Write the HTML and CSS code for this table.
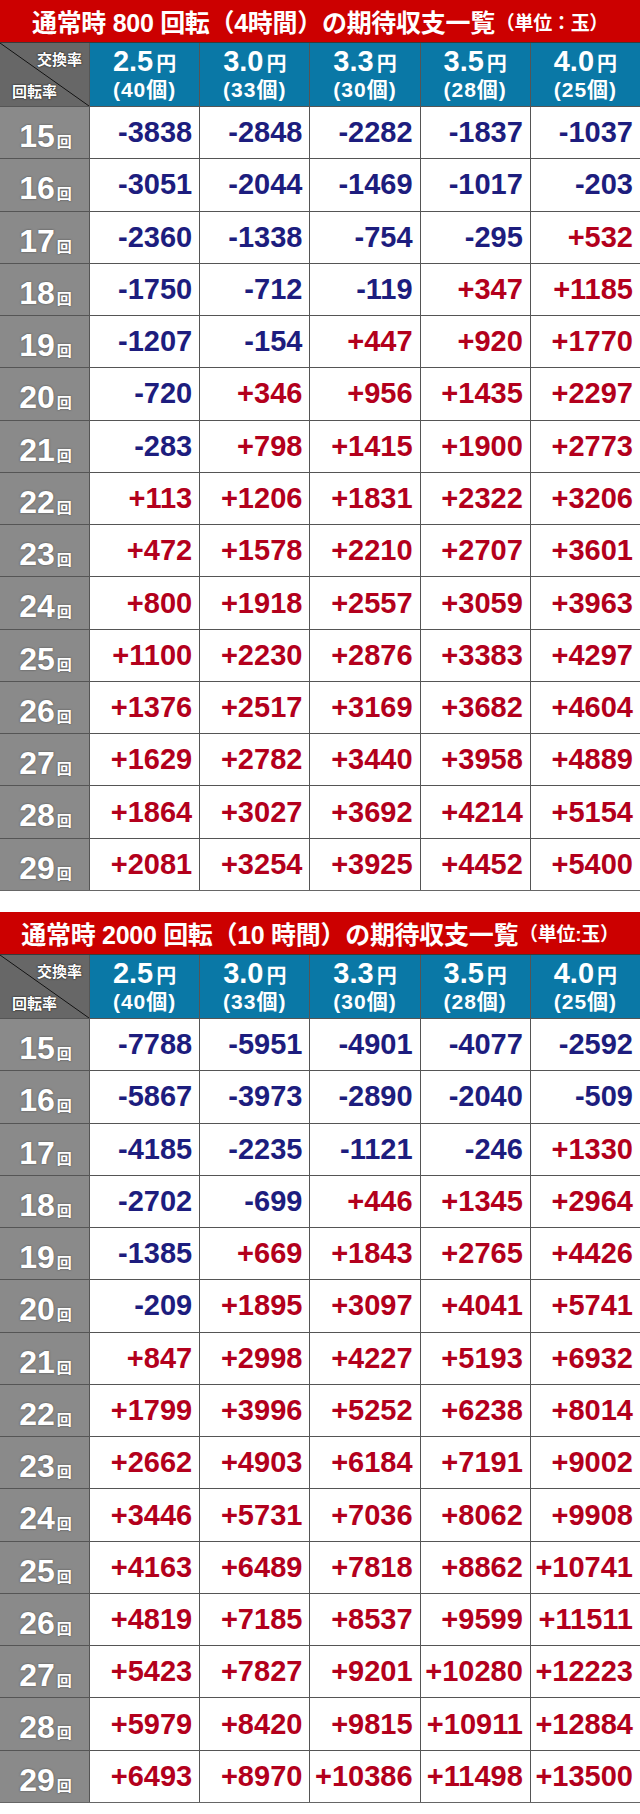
FILE: index.html
```html
<!DOCTYPE html>
<html lang="ja">
<head>
<meta charset="utf-8">
<title>期待収支一覧</title>
<link rel="stylesheet" href="styles.css">
</head>
<body>
<section class="block">
  <h2 class="title">通常時 800 回転（4時間）の期待収支一覧<span class="unit">（単位：玉）</span></h2>
  <div class="grid">
    <div class="corner"><span class="c-top">交換率</span><span class="c-bot">回転率</span></div>
    <div class="head"><div class="h1">2.5<span class="yen">円</span></div><div class="h2">(40個)</div></div>
    <div class="head"><div class="h1">3.0<span class="yen">円</span></div><div class="h2">(33個)</div></div>
    <div class="head"><div class="h1">3.3<span class="yen">円</span></div><div class="h2">(30個)</div></div>
    <div class="head"><div class="h1">3.5<span class="yen">円</span></div><div class="h2">(28個)</div></div>
    <div class="head"><div class="h1">4.0<span class="yen">円</span></div><div class="h2">(25個)</div></div>

    <div class="rl">15<span class="kai">回</span></div><div class="c neg">-3838</div><div class="c neg">-2848</div><div class="c neg">-2282</div><div class="c neg">-1837</div><div class="c neg">-1037</div>
    <div class="rl">16<span class="kai">回</span></div><div class="c neg">-3051</div><div class="c neg">-2044</div><div class="c neg">-1469</div><div class="c neg">-1017</div><div class="c neg">-203</div>
    <div class="rl">17<span class="kai">回</span></div><div class="c neg">-2360</div><div class="c neg">-1338</div><div class="c neg">-754</div><div class="c neg">-295</div><div class="c pos">+532</div>
    <div class="rl">18<span class="kai">回</span></div><div class="c neg">-1750</div><div class="c neg">-712</div><div class="c neg">-119</div><div class="c pos">+347</div><div class="c pos">+1185</div>
    <div class="rl">19<span class="kai">回</span></div><div class="c neg">-1207</div><div class="c neg">-154</div><div class="c pos">+447</div><div class="c pos">+920</div><div class="c pos">+1770</div>
    <div class="rl">20<span class="kai">回</span></div><div class="c neg">-720</div><div class="c pos">+346</div><div class="c pos">+956</div><div class="c pos">+1435</div><div class="c pos">+2297</div>
    <div class="rl">21<span class="kai">回</span></div><div class="c neg">-283</div><div class="c pos">+798</div><div class="c pos">+1415</div><div class="c pos">+1900</div><div class="c pos">+2773</div>
    <div class="rl">22<span class="kai">回</span></div><div class="c pos">+113</div><div class="c pos">+1206</div><div class="c pos">+1831</div><div class="c pos">+2322</div><div class="c pos">+3206</div>
    <div class="rl">23<span class="kai">回</span></div><div class="c pos">+472</div><div class="c pos">+1578</div><div class="c pos">+2210</div><div class="c pos">+2707</div><div class="c pos">+3601</div>
    <div class="rl">24<span class="kai">回</span></div><div class="c pos">+800</div><div class="c pos">+1918</div><div class="c pos">+2557</div><div class="c pos">+3059</div><div class="c pos">+3963</div>
    <div class="rl">25<span class="kai">回</span></div><div class="c pos">+1100</div><div class="c pos">+2230</div><div class="c pos">+2876</div><div class="c pos">+3383</div><div class="c pos">+4297</div>
    <div class="rl">26<span class="kai">回</span></div><div class="c pos">+1376</div><div class="c pos">+2517</div><div class="c pos">+3169</div><div class="c pos">+3682</div><div class="c pos">+4604</div>
    <div class="rl">27<span class="kai">回</span></div><div class="c pos">+1629</div><div class="c pos">+2782</div><div class="c pos">+3440</div><div class="c pos">+3958</div><div class="c pos">+4889</div>
    <div class="rl">28<span class="kai">回</span></div><div class="c pos">+1864</div><div class="c pos">+3027</div><div class="c pos">+3692</div><div class="c pos">+4214</div><div class="c pos">+5154</div>
    <div class="rl">29<span class="kai">回</span></div><div class="c pos">+2081</div><div class="c pos">+3254</div><div class="c pos">+3925</div><div class="c pos">+4452</div><div class="c pos">+5400</div>
  </div>
</section>

<section class="block second">
  <h2 class="title">通常時 2000 回転（10 時間）の期待収支一覧<span class="unit">（単位:玉）</span></h2>
  <div class="grid">
    <div class="corner"><span class="c-top">交換率</span><span class="c-bot">回転率</span></div>
    <div class="head"><div class="h1">2.5<span class="yen">円</span></div><div class="h2">(40個)</div></div>
    <div class="head"><div class="h1">3.0<span class="yen">円</span></div><div class="h2">(33個)</div></div>
    <div class="head"><div class="h1">3.3<span class="yen">円</span></div><div class="h2">(30個)</div></div>
    <div class="head"><div class="h1">3.5<span class="yen">円</span></div><div class="h2">(28個)</div></div>
    <div class="head"><div class="h1">4.0<span class="yen">円</span></div><div class="h2">(25個)</div></div>

    <div class="rl">15<span class="kai">回</span></div><div class="c neg">-7788</div><div class="c neg">-5951</div><div class="c neg">-4901</div><div class="c neg">-4077</div><div class="c neg">-2592</div>
    <div class="rl">16<span class="kai">回</span></div><div class="c neg">-5867</div><div class="c neg">-3973</div><div class="c neg">-2890</div><div class="c neg">-2040</div><div class="c neg">-509</div>
    <div class="rl">17<span class="kai">回</span></div><div class="c neg">-4185</div><div class="c neg">-2235</div><div class="c neg">-1121</div><div class="c neg">-246</div><div class="c pos">+1330</div>
    <div class="rl">18<span class="kai">回</span></div><div class="c neg">-2702</div><div class="c neg">-699</div><div class="c pos">+446</div><div class="c pos">+1345</div><div class="c pos">+2964</div>
    <div class="rl">19<span class="kai">回</span></div><div class="c neg">-1385</div><div class="c pos">+669</div><div class="c pos">+1843</div><div class="c pos">+2765</div><div class="c pos">+4426</div>
    <div class="rl">20<span class="kai">回</span></div><div class="c neg">-209</div><div class="c pos">+1895</div><div class="c pos">+3097</div><div class="c pos">+4041</div><div class="c pos">+5741</div>
    <div class="rl">21<span class="kai">回</span></div><div class="c pos">+847</div><div class="c pos">+2998</div><div class="c pos">+4227</div><div class="c pos">+5193</div><div class="c pos">+6932</div>
    <div class="rl">22<span class="kai">回</span></div><div class="c pos">+1799</div><div class="c pos">+3996</div><div class="c pos">+5252</div><div class="c pos">+6238</div><div class="c pos">+8014</div>
    <div class="rl">23<span class="kai">回</span></div><div class="c pos">+2662</div><div class="c pos">+4903</div><div class="c pos">+6184</div><div class="c pos">+7191</div><div class="c pos">+9002</div>
    <div class="rl">24<span class="kai">回</span></div><div class="c pos">+3446</div><div class="c pos">+5731</div><div class="c pos">+7036</div><div class="c pos">+8062</div><div class="c pos">+9908</div>
    <div class="rl">25<span class="kai">回</span></div><div class="c pos">+4163</div><div class="c pos">+6489</div><div class="c pos">+7818</div><div class="c pos">+8862</div><div class="c pos">+10741</div>
    <div class="rl">26<span class="kai">回</span></div><div class="c pos">+4819</div><div class="c pos">+7185</div><div class="c pos">+8537</div><div class="c pos">+9599</div><div class="c pos">+11511</div>
    <div class="rl">27<span class="kai">回</span></div><div class="c pos">+5423</div><div class="c pos">+7827</div><div class="c pos">+9201</div><div class="c pos">+10280</div><div class="c pos">+12223</div>
    <div class="rl">28<span class="kai">回</span></div><div class="c pos">+5979</div><div class="c pos">+8420</div><div class="c pos">+9815</div><div class="c pos">+10911</div><div class="c pos">+12884</div>
    <div class="rl">29<span class="kai">回</span></div><div class="c pos">+6493</div><div class="c pos">+8970</div><div class="c pos">+10386</div><div class="c pos">+11498</div><div class="c pos">+13500</div>
  </div>
</section>
</body>
</html>
```

FILE: styles.css
```css
html, body {
  margin: 0;
  padding: 0;
  background: #ffffff;
}
body {
  width: 640px;
  font-family: "Liberation Sans", "Noto Sans CJK JP", sans-serif;
  font-weight: bold;
}
.block {
  display: flex;
  flex-direction: column;
}
.second {
  margin-top: 21px;
}
.title {
  margin: 0;
  height: 42px;
  border-bottom: 1px solid #3a3a3a;
  background: #cc0000;
  color: #ffffff;
  font-size: 25px;
  font-weight: bold;
  display: flex;
  align-items: center;
  justify-content: center;
  white-space: nowrap;
  letter-spacing: -0.3px;
}
.unit {
  font-size: 19px;
  margin-left: 1px;
}
.grid {
  display: grid;
  grid-template-columns: 89px repeat(5, 1fr);
  grid-template-rows: 63px;
  grid-auto-rows: 51.27px;
  gap: 1px;
  background: #555555;
  border-bottom: 1px solid #666666;
}
.corner {
  position: relative;
  background: linear-gradient(to top right, #676767 calc(50% - 0.8px), #111111 50%, #676767 calc(50% + 0.8px));
  color: #ffffff;
  font-size: 15px;
  text-shadow: 0 0 2px #222, 0 0 1px #222;
}
.c-top {
  position: absolute;
  top: 5px;
  right: 7px;
}
.c-bot {
  position: absolute;
  bottom: 5px;
  left: 12px;
}
.head {
  background: #0a78a6;
  color: #ffffff;
  display: flex;
  flex-direction: column;
  align-items: center;
  justify-content: center;
}
.h1 {
  font-size: 29px;
  line-height: 28px;
}
.yen {
  font-size: 20px;
  margin-left: 3px;
}
.h2 {
  font-size: 21px;
  line-height: 24px;
  letter-spacing: 1px;
  margin-top: 0;
}
.rl {
  background: #8a8a8a;
  color: #ffffff;
  font-size: 32px;
  display: flex;
  align-items: baseline;
  justify-content: center;
  padding-top: 11px;
  box-sizing: border-box;
  text-shadow: 0 0 2px #444;
  padding-left: 2px;
}
.kai {
  font-size: 15px;
  margin-left: 2px;
}
.c {
  background: #ffffff;
  font-size: 29px;
  display: flex;
  align-items: center;
  justify-content: flex-end;
  padding-right: 7px;
  white-space: nowrap;
}
.neg {
  color: #1d1d7e;
}
.pos {
  color: #b3001c;
}
```
